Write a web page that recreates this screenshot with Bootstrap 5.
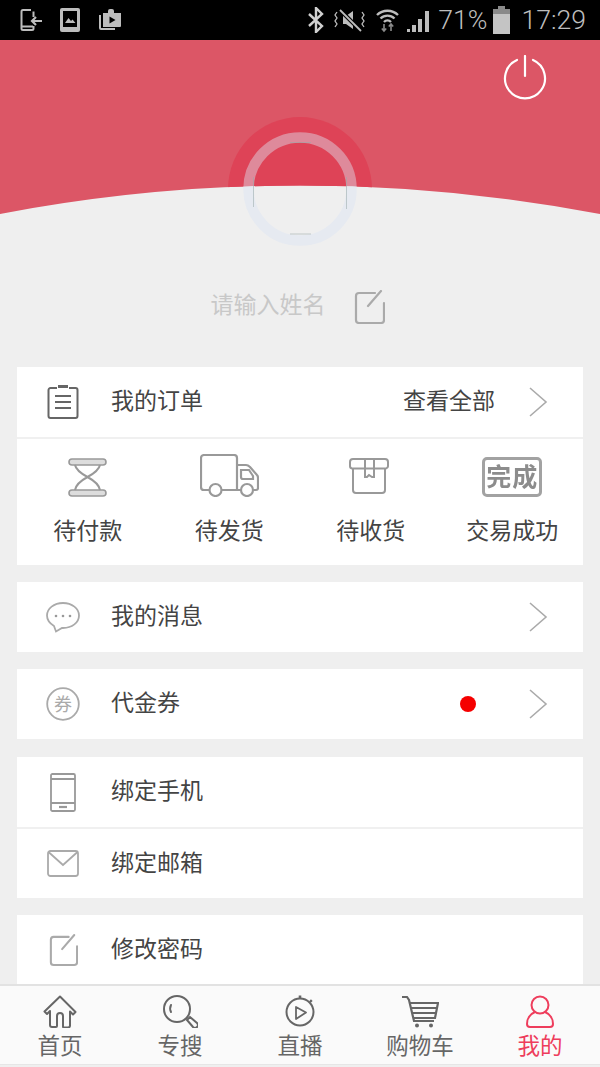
<!DOCTYPE html>
<html lang="zh-CN">
<head>
    <meta charset="UTF-8">
    <meta name="viewport" content="width=device-width, initial-scale=1.0">
    <title>我的</title>
    <link href="https://cdn.jsdelivr.net/npm/bootstrap@5.3.0/dist/css/bootstrap.min.css" rel="stylesheet">
    <style>
        html, body { height: 100%; }
        body {
            background-color: #efefef;
            color: #444;
            font-family: "Noto Sans CJK SC", "Liberation Sans", sans-serif;
            font-size: 23px;
            line-height: 30px;
            overflow: hidden;
        }
        .page { height: 1067px; }
        .status-bar {
            height: 40px;
            flex: none;
            background: #000;
            color: #bdbdbd;
            font-family: Roboto, sans-serif;
            font-weight: 300;
            font-size: 26.6px;
            padding: 0 14px 0 20px;
        }
        .status-bar svg { display: block; flex: none; }
        .st-photo { margin-left: 18px; }
        .st-bag { margin-left: 19px; }
        .st-mute { margin-left: 10px; }
        .st-wifi { margin-left: 11px; }
        .st-signal { margin-left: 8px; }
        .st-percent { margin-left: 8px; }
        .st-battery { margin-left: 6px; }
        .st-time { margin-left: 11px; }
        .main-area { min-height: 0; overflow: hidden; }
        .hero { height: 327px; position: relative; }
        .hero-art { display: block; }
        .power-btn {
            position: absolute;
            top: 15px;
            left: 503px;
            padding: 0;
            border: 0;
            background: none;
            line-height: 0;
        }
        .name-row {
            color: #c8c8c8;
            padding-top: 37px;
            padding-right: 5px;
            height: 77px;
            gap: 28px;
        }
        .name-text { margin-bottom: 8px; }
        .menu-card {
            margin: 0 17px 17px;
            border: 0;
            border-radius: 0;
            background: #fff;
        }
        .menu-card-phone { margin-top: 18px; }
        .menu-line {
            height: 70px;
            border-radius: 0;
            border: 0;
            padding: 0;
            color: #444;
        }
        .menu-line + .menu-line { height: 71px; border-top: 2px solid #f0f0f0; }
        .order-grid { border-top: 2px solid #f0f0f0; }
        .menu-ico {
            width: 94px;
            padding-right: 2px;
            display: flex;
            justify-content: center;
            flex: none;
        }
        .menu-txt { margin-bottom: 6px; }
        .menu-arrow { margin: 0 35px 0 33px; flex: none; }
        .red-dot {
            width: 16px;
            height: 16px;
            border-radius: 50%;
            background: #f50000;
            margin-right: 52px;
        }
        .order-grid { height: 128px; }
        .order-ico { height: 48px; margin: 10px 0 17px; }
        .box-ico { margin: 0 4px 3px 0; }
        .done-stamp {
            width: 60px;
            height: 40px;
            margin-top: 8px;
            border: 3px solid #a2a2a2;
            border-radius: 5px;
            color: #8c8c8c;
            font-size: 25px;
            font-weight: 700;
            line-height: 30px;
            letter-spacing: 1px;
            white-space: nowrap;
            overflow: hidden;
            filter: blur(.4px);
        }
        .tab-bar {
            height: 81px;
            flex: none;
            background: #fafafa;
            border-top: 2px solid #e2e2e2;
            border-bottom: 1px solid #e6e6e6;
            margin-bottom: 2px;
            color: #666;
            font-size: 22.5px;
            line-height: 28px;
        }
        .tab-ico { height: 35px; margin-top: 9px; display: flex; justify-content: center; align-items: flex-start; }
        .tab-on { color: #ee3d5c; }
    </style>
</head>
<body>
<div class="page d-flex flex-column">
    <div class="status-bar d-flex align-items-center">
        <svg width="22" height="24" viewBox="0 0 22 24" fill="none" stroke="#bdbdbd" stroke-width="2">
            <path d="M11 2H3a1.500 1.500 0 0 0-1.500 1.500v17A1.500 1.500 0 0 0 3 22h9a1.500 1.500 0 0 0 1.500-1.500V18M1.500 18.500H13M13.500 9V3.500"/>
            <path d="M22 13h-10M16 9l-4 4 4 4" stroke-width="2.200"/>
        </svg>
        <svg class="st-photo" width="20" height="24" viewBox="0 0 20 24">
            <rect x="0" y="0" width="20" height="24" rx="2" fill="#bdbdbd"/>
            <rect x="3" y="3" width="14" height="16" fill="#000"/>
            <path d="M5 15l3.500-5 2.500 3 1.500-1.500 3 3.500z" fill="#bdbdbd"/>
        </svg>
        <svg class="st-bag" width="22" height="24" viewBox="0 0 22 24">
            <path d="M0 7h2v13h14v2H2a2 2 0 0 1-2-2z" fill="#bdbdbd"/>
            <path d="M4 5h5V3a2 2 0 0 1 2-2h2a2 2 0 0 1 2 2v2h7v13a1 1 0 0 1-1 1H4z" fill="#bdbdbd"/>
            <path d="M10.500 8.500l6 3.500-6 3.500z" fill="#000"/>
        </svg>
        <svg class="ms-auto" width="16" height="26" viewBox="0 0 16 26" fill="none" stroke="#d0d0d0" stroke-width="2.400">
            <path d="M1 7l13 12-6 6V1l6 6L1 19"/>
        </svg>
        <svg class="st-mute" width="31" height="24" viewBox="0 0 31 24" fill="none" stroke="#bdbdbd" stroke-width="1.800">
            <path d="M9 8h3l7-5v18l-7-5H9z" fill="#bdbdbd" stroke="none"/>
            <path d="M6 2l21 21" stroke="#000" stroke-width="4"/>
            <path d="M6 2l21 21"/>
            <path d="M3 4l-2 3 2 3-2 3 2 3-2 3M28 4l2 3-2 3 2 3-2 3 2 3" stroke-width="1.300"/>
        </svg>
        <svg class="st-wifi" width="23" height="26" viewBox="0 0 23 26" fill="none" stroke="#bdbdbd" stroke-width="2.400">
            <path d="M1 8a15 15 0 0 1 21 0M4.500 11.500a10 10 0 0 1 14 0M8 15a5 5 0 0 1 7 0"/>
            <path d="M8 17v7M5.800 21.500L8 24l2.200-2.500M15 24v-7M12.800 19.500L15 17l2.200 2.500" stroke-width="1.600" stroke="#8a8a8a"/>
        </svg>
        <svg class="st-signal" width="23" height="24" viewBox="0 0 23 24" fill="#bdbdbd">
            <path d="M0 24v-3h3v3zM5 24v-7h4v7zM11 24V11h4v13zM18 24V3h4v21z"/>
        </svg>
        <span class="st-percent">71%</span>
        <svg class="st-battery" width="17" height="28" viewBox="0 0 17 28">
            <rect x="5" y="0" width="7" height="3" fill="#8a8a8a"/>
            <rect x="0" y="3" width="17" height="5" fill="#8a8a8a"/>
            <rect x="0" y="8" width="17" height="20" fill="#c4c4c4"/>
        </svg>
        <span class="st-time">17:29</span>
    </div>

    <div class="main-area flex-grow-1">
        <div class="hero">
            <!-- header band with the avatar ring, in page coords shifted by 40 -->
            <svg class="hero-art" width="600" height="210" viewBox="0 40 600 210">
                <defs>
                    <clipPath id="bandClip"><path d="M0 40H600V214Q300 157 0 214Z"/></clipPath>
                    <clipPath id="belowClip"><path d="M0 214Q300 157 600 214V260H0Z"/></clipPath>
                </defs>
                <path d="M0 40H600V214Q300 157 0 214Z" fill="#dc5666"/>
                <g clip-path="url(#bandClip)">
                    <circle cx="300" cy="189" r="72" fill="#de4357"/>
                    <circle cx="300" cy="189" r="51.500" fill="none" stroke="#de8a9b" stroke-width="10.500"/>
                </g>
                <g clip-path="url(#belowClip)">
                    <circle cx="300" cy="189" r="51.500" fill="none" stroke="#e6eaf1" stroke-width="10.500"/>
                </g>
                <path d="M290 142.500h21M253.500 177v30M346.500 177v32M290 234h21" stroke="#9aa" stroke-width="1" fill="none" opacity=".55"/>
            </svg>
            <button class="power-btn" type="button" aria-label="退出">
                <svg width="44" height="45" viewBox="0 0 44 45" fill="none" stroke="#fff" stroke-width="2.200" stroke-linecap="round">
                    <path d="M30 5a20 20 0 1 1-16 0"/>
                    <path d="M22 1v20"/>
                </svg>
            </button>
            <div class="name-row d-flex justify-content-center align-items-center">
                <span class="name-text">请输入姓名</span>
                <svg width="31" height="34" viewBox="0 0 31 34" fill="none" stroke="#aaa" stroke-width="2.200" stroke-linecap="round">
                    <path d="M21 3H5a3 3 0 0 0-3 3v24a3 3 0 0 0 3 3h22a3 3 0 0 0 3-3V13"/>
                    <path d="M27 1L14 16"/>
                </svg>
            </div>
        </div>

        <div class="card menu-card mt-0">
            <div class="menu-line d-flex align-items-center">
                <div class="menu-ico">
                    <svg width="32" height="34" viewBox="0 0 32 34" fill="none" stroke="#666" stroke-width="2">
                        <path d="M10 3H3.500A2 2 0 0 0 1.500 5v26a2 2 0 0 0 2 2h25a2 2 0 0 0 2-2V5a2 2 0 0 0-2-2H22"/>
                        <path d="M11 1.500h10" stroke-width="3"/>
                        <path d="M8 11h16M8 17h16M8 23h16"/>
                    </svg>
                </div>
                <span class="menu-txt">我的订单</span>
                <span class="menu-txt ms-auto">查看全部</span>
                <svg class="menu-arrow" width="20" height="32" viewBox="0 0 20 32" fill="none" stroke="#aaa" stroke-width="1.600"><path d="M2 2l16 14L2 30"/></svg>
            </div>
            <div class="order-grid row g-0 text-center">
                <div class="col-3">
                    <div class="order-ico d-flex justify-content-center align-items-end">
                        <svg width="39" height="39" viewBox="0 0 39 39" fill="none" stroke="#999" stroke-width="2">
                            <rect x="1" y="1" width="37" height="6" rx="3" fill="#ddd" stroke-width="1.600"/>
                            <rect x="1" y="32" width="37" height="6" rx="3" fill="#ddd" stroke-width="1.600"/>
                            <path d="M7 7C8 12 14 16 19.500 19 25 16 31 12 32 7M7 32C8 26 14 22 19.500 19 25 22 31 26 32 32"/>
                        </svg>
                    </div>
                    <div>待付款</div>
                </div>
                <div class="col-3">
                    <div class="order-ico d-flex justify-content-center align-items-end">
                        <svg width="59" height="43" viewBox="0 0 59 43" fill="none" stroke="#999" stroke-width="2.200">
                            <path d="M9 36H4a3 3 0 0 1-3-3V4a3 3 0 0 1 3-3h30a3 3 0 0 1 3 3v32H22"/>
                            <path d="M37 11h9c2 0 3 1 4 2l7 8c1 1 1 2 1 3v10a2 2 0 0 1-2 2h-4M41 36h-4"/>
                            <path d="M41 16h8l4 6v3H43a2 2 0 0 1-2-2z"/>
                            <circle cx="15.500" cy="36" r="6"/>
                            <circle cx="47" cy="36" r="6"/>
                        </svg>
                    </div>
                    <div>待发货</div>
                </div>
                <div class="col-3">
                    <div class="order-ico d-flex justify-content-center align-items-end">
                        <svg class="box-ico" width="40" height="36" viewBox="0 0 40 36" fill="none" stroke="#999" stroke-width="2">
                            <path d="M3 10.500A2.500 2.500 0 0 1 1 8V4a3 3 0 0 1 3-3h32a3 3 0 0 1 3 3v4a2.500 2.500 0 0 1-2 2.500z"/>
                            <path d="M4 10.500V32a3 3 0 0 0 3 3h26a3 3 0 0 0 3-3V10.500"/>
                            <path d="M16 1v18h2l2-2 3 2h2V1"/>
                        </svg>
                    </div>
                    <div>待收货</div>
                </div>
                <div class="col-3">
                    <div class="order-ico d-flex justify-content-center">
                        <div class="done-stamp">完成</div>
                    </div>
                    <div>交易成功</div>
                </div>
            </div>
        </div>

        <div class="card menu-card">
            <div class="menu-line d-flex align-items-center">
                <div class="menu-ico">
                    <svg width="34" height="31" viewBox="0 0 34 31" fill="none" stroke="#aaa" stroke-width="1.800">
                        <path d="M17 1C8 1 1 6.500 1 13.500c0 4.500 3 8 7 10.500l2 5.500 6-3.500h1c9 0 16-5.500 16-12.500S26 1 17 1z"/>
                        <circle cx="10" cy="14" r="1.300" fill="#999" stroke="none"/>
                        <circle cx="17" cy="14" r="1.300" fill="#999" stroke="none"/>
                        <circle cx="24" cy="14" r="1.300" fill="#999" stroke="none"/>
                    </svg>
                </div>
                <span class="menu-txt">我的消息</span>
                <svg class="menu-arrow ms-auto" width="20" height="32" viewBox="0 0 20 32" fill="none" stroke="#aaa" stroke-width="1.600"><path d="M2 2l16 14L2 30"/></svg>
            </div>
        </div>

        <div class="card menu-card">
            <div class="menu-line d-flex align-items-center">
                <div class="menu-ico">
                    <svg width="34" height="34" viewBox="0 0 34 34">
                        <circle cx="17" cy="17" r="15.800" fill="none" stroke="#aaa" stroke-width="1.800"/>
                        <text x="17" y="23.500" text-anchor="middle" font-size="18" fill="#aaa" font-family="Noto Sans CJK SC, sans-serif">券</text>
                    </svg>
                </div>
                <span class="menu-txt">代金券</span>
                <span class="red-dot ms-auto"></span>
                <svg class="menu-arrow ms-0" width="20" height="32" viewBox="0 0 20 32" fill="none" stroke="#aaa" stroke-width="1.600"><path d="M2 2l16 14L2 30"/></svg>
            </div>
        </div>

        <div class="card menu-card menu-card-phone">
            <div class="menu-line d-flex align-items-center">
                <div class="menu-ico">
                    <svg width="26" height="39" viewBox="0 0 26 39" fill="none" stroke="#999" stroke-width="1.800">
                        <rect x="1" y="1" width="24" height="37" rx="1.500"/>
                        <path d="M1 6h24M1 30h24"/>
                        <path d="M9 34h8" stroke-width="2.200"/>
                    </svg>
                </div>
                <span class="menu-txt">绑定手机</span>
            </div>
            <div class="menu-line d-flex align-items-center">
                <div class="menu-ico">
                    <svg width="32" height="27" viewBox="0 0 32 27" fill="none" stroke="#aaa" stroke-width="1.800">
                        <rect x="1" y="1" width="30" height="25" rx="2.500"/>
                        <path d="M1.500 2L16 15 30.500 2"/>
                    </svg>
                </div>
                <span class="menu-txt">绑定邮箱</span>
            </div>
        </div>

        <div class="card menu-card">
            <div class="menu-line d-flex align-items-center">
                <div class="menu-ico">
                    <svg width="29" height="34" viewBox="0 0 31 34" fill="none" stroke="#aaa" stroke-width="2.200" stroke-linecap="round">
                        <path d="M21 3H5a3 3 0 0 0-3 3v24a3 3 0 0 0 3 3h22a3 3 0 0 0 3-3V13"/>
                        <path d="M27 1L14 16"/>
                    </svg>
                </div>
                <span class="menu-txt">修改密码</span>
            </div>
        </div>
    </div>

    <nav class="tab-bar row g-0 text-center">
        <div class="col">
            <div class="tab-ico">
                <svg width="34" height="33" viewBox="0 0 34 33" fill="none" stroke="#666" stroke-width="2" stroke-linejoin="round">
                    <path d="M17 1.500L1.500 16.500l2.500 2.500 3-3v14a2 2 0 0 0 2 2h4a1 1 0 0 0 1-1V21a3 3 0 0 1 6 0v10.500a1 1 0 0 0 1 1h4a2 2 0 0 0 2-2v-14l3 3 2.500-2.500z"/>
                </svg>
            </div>
            <div>首页</div>
        </div>
        <div class="col">
            <div class="tab-ico">
                <svg width="35" height="33" viewBox="0 0 35 33" fill="none" stroke="#666" stroke-width="2">
                    <circle cx="14" cy="14" r="13"/>
                    <path d="M8 10c-1 2-1 5 0 7" stroke-linecap="round"/>
                    <path d="M24 25l3-3 7 6a2 2 0 0 1-4 4z"/>
                </svg>
            </div>
            <div>专搜</div>
        </div>
        <div class="col">
            <div class="tab-ico">
                <svg width="30" height="33" viewBox="0 0 30 33" fill="none" stroke="#666" stroke-width="2">
                    <circle cx="15" cy="17" r="13.500"/>
                    <path d="M15 3.500V0.500" stroke-width="2.600"/>
                    <path d="M25 7l1.800-1.800" stroke-width="2.400"/>
                    <path d="M11 12l10 5.500-10 6.500z" stroke-width="1.800" stroke-linejoin="round"/>
                </svg>
            </div>
            <div>直播</div>
        </div>
        <div class="col">
            <div class="tab-ico">
                <svg width="37" height="33" viewBox="0 0 37 33" fill="none" stroke="#666" stroke-width="2.200">
                    <path d="M0 2h5l2 3 5 21h20"/>
                    <path d="M7 8h29l-3 15H11"/>
                    <path d="M9 13h26M10 18h24" stroke-width="1.800"/>
                    <circle cx="15" cy="30.500" r="2" fill="#666" stroke="none"/>
                    <circle cx="29" cy="30.500" r="2" fill="#666" stroke="none"/>
                </svg>
            </div>
            <div>购物车</div>
        </div>
        <div class="col tab-on">
            <div class="tab-ico">
                <svg width="28" height="33" viewBox="0 0 28 33" fill="none" stroke="#ee3d5c" stroke-width="2">
                    <circle cx="14" cy="10" r="8.500"/>
                    <path d="M9 17c-5 2-8 7-8 12a3 3 0 0 0 3 3h20a3 3 0 0 0 3-3c0-5-3-10-8-12"/>
                </svg>
            </div>
            <div>我的</div>
        </div>
    </nav>
</div>
</body>
</html>
